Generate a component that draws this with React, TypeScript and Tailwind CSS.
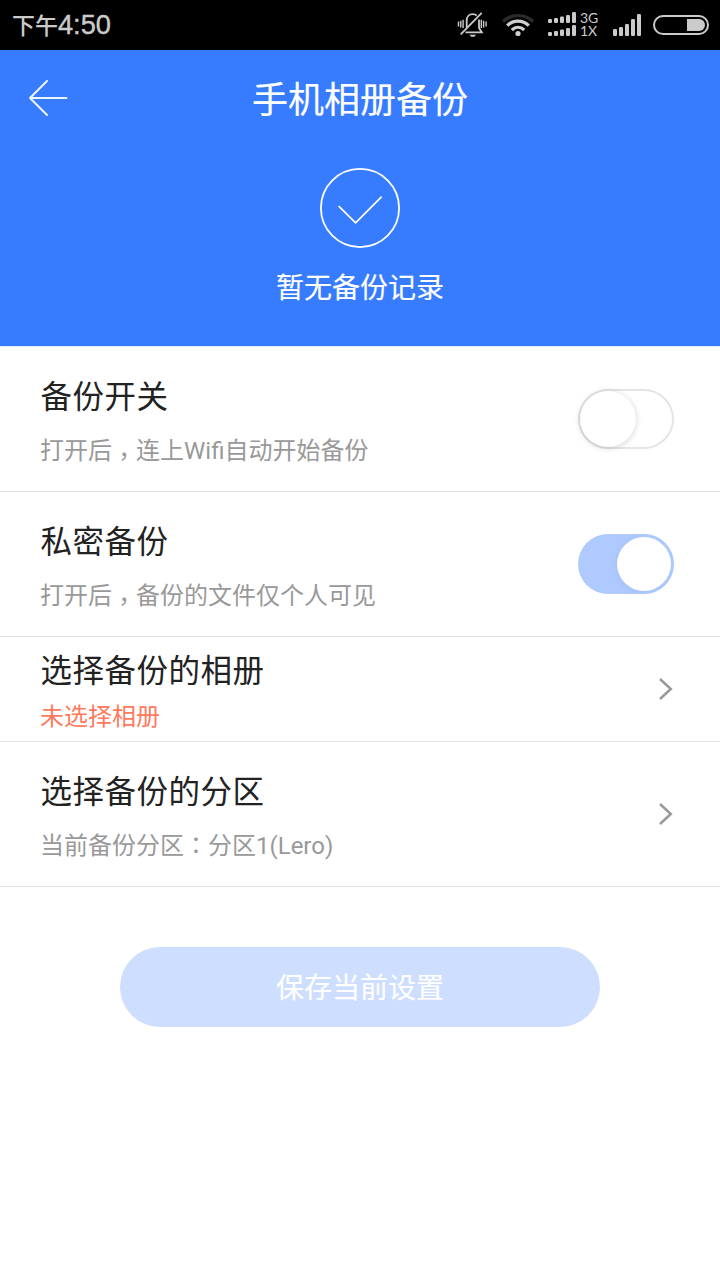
import type { ReactNode } from 'react';

function MutedBell() {
  return (
    <svg className="h-[30px] w-[32px]" viewBox="0 0 32 30" fill="none" stroke="#cbcbcb" strokeWidth="1.8">
      <path d="M9.700 17.500V10.500c0-4 2.500-6.300 6-6.300 1.600 0 3 .5 4 1.300M22 9.500v8.500l2.800 4.400H8.500" />
      <path d="M3.700 24.300L24.700 2.900" />
      <path d="M1.500 11.500v5M3.800 10.800v6.600M6.100 9.800v8.200M24.300 9.800v8.200M26.600 10.800v6.600M29.100 11.500v5" strokeWidth="1.400" />
      <path d="M12.500 24.800h6.500l-1.600 2h-3.300z" fill="#cbcbcb" stroke="none" />
    </svg>
  );
}

function Wifi() {
  return (
    <svg className="h-[26px] w-[34px]" viewBox="0 0 34 26" fill="none" strokeWidth="3.200">
      <path d="M2 9.500c8.500-8 21.500-8 30 0" stroke="#2c2c2c" />
      <path d="M6.200 13.700c6.200-6 15.400-6 21.600 0" stroke="#d0d0d0" />
      <path d="M10.800 18c3.700-3.500 8.700-3.500 12.400 0" stroke="#d0d0d0" />
      <circle cx="17" cy="21.500" r="2.600" fill="#d0d0d0" />
    </svg>
  );
}

function DualSignal() {
  const heights = [4, 5, 6.5, 8, 11];
  return (
    <svg className="h-[26px] w-[28px]" viewBox="0 0 28 26" fill="#cbcbcb">
      {[11, 24].map((base) =>
        heights.map((h, i) => (
          <rect key={`${base}-${i}`} x={i * 6} y={base - h} width="4" height={h} rx="1.200" />
        )),
      )}
    </svg>
  );
}

function Signal() {
  const heights = [7, 9, 12, 17, 22];
  return (
    <svg className="h-[24px] w-[28px]" viewBox="0 0 28 24" fill="#cbcbcb">
      {heights.map((h, i) => (
        <rect key={h} x={i * 6} y={23 - h} width="4" height={h} rx="1.200" />
      ))}
    </svg>
  );
}

function Battery() {
  return (
    <svg className="h-[20px] w-[56px]" viewBox="0 0 56 20">
      <rect x="1" y="1" width="54" height="18" rx="9" fill="none" stroke="#cbcbcb" strokeWidth="2" />
      <path d="M34 4h12a6 6 0 0 1 0 12h-12z" fill="#cbcbcb" />
    </svg>
  );
}

function StatusBar() {
  return (
    <div className="flex h-[50px] items-center bg-black pl-3 pr-[11px] text-[#cbcbcb]">
      <div className="flex flex-1 items-center">
        <span className="pb-[3px] font-['Noto_Sans_CJK_SC',sans-serif] text-[23px] font-medium leading-[40px]">下午</span>
        <span className="font-['Liberation_Sans',sans-serif] text-[27.200px] leading-[40px] [-webkit-text-stroke:0.400px_#cbcbcb]">4:50</span>
      </div>
      <MutedBell />
      <div className="ml-[12px] flex"><Wifi /></div>
      <div className="ml-[13px] flex"><DualSignal /></div>
      <div className="ml-[4px] w-[20px] pb-[2px] font-['Lato',sans-serif] text-[14px] leading-[13px]">
        <div>3G</div>
        <div>1X</div>
      </div>
      <div className="ml-[13px] flex"><Signal /></div>
      <div className="ml-[12px] flex"><Battery /></div>
    </div>
  );
}

function Header() {
  return (
    <header className="h-[296px] bg-[#377bff] text-white">
      <div className="grid h-24 grid-cols-[96px_1fr_96px] items-center">
        <button aria-label="返回" className="pl-7">
          <svg className="h-[38px] w-[40px]" viewBox="0 0 40 38" fill="none" stroke="#fff" strokeOpacity=".92" strokeWidth="2" strokeLinecap="round" strokeLinejoin="round">
            <path d="M19 2L2 19l17 17M2 19h36.500" />
          </svg>
        </button>
        <h1 className="pt-[5px] text-center text-4xl [-webkit-text-stroke:0.200px_#fff]">手机相册备份</h1>
      </div>
      <div className="flex flex-col items-center pt-[22px]">
        <svg className="size-20" viewBox="0 0 80 80" fill="none" stroke="#fff" strokeWidth="1.800">
          <circle cx="40" cy="40" r="39.100" />
          <path d="M18.700 38.200L35.600 54.800 61.700 28.700" />
        </svg>
        <p className="mt-[21px] text-[28px] leading-10 [-webkit-text-stroke:0.150px_#fff]">暂无备份记录</p>
      </div>
    </header>
  );
}

function Toggle({ on }: { on: boolean }) {
  return on ? (
    <span className="flex h-[60px] w-24 items-center justify-end rounded-full bg-[#afcaff] pr-[3px]">
      <span className="size-[54px] rounded-full bg-white shadow-[-1px_1px_6px_rgba(90,120,190,0.120)]" />
    </span>
  ) : (
    <span className="flex h-[60px] w-24 items-center rounded-full border-2 border-[#e5e5e5] bg-white">
      <span className="size-[56px] rounded-full bg-white shadow-[0_1px_6px_rgba(0,0,0,0.180)]" />
    </span>
  );
}

function Chevron() {
  return (
    <svg className="h-6 w-4" viewBox="0 0 16 24" fill="none" stroke="#999" strokeWidth="2.500">
      <path d="M2 2l10.800 10L2 22" />
    </svg>
  );
}

/* Full-width punctuation sits in the middle of its cell. */
function Mark({ children, low }: { children: ReactNode; low?: boolean }) {
  return (
    <span
      lang="zh-TW"
      className={`inline-block w-6 font-['Noto_Sans_CJK_TC',sans-serif] leading-none ${low ? 'align-[-6px]' : ''}`}
    >
      {children}
    </span>
  );
}

interface RowProps {
  title: string;
  note: ReactNode;
  control: ReactNode;
  compact?: boolean;
  alert?: boolean;
}

function Row({ title, note, control, compact, alert }: RowProps) {
  return (
    <section
      className={`flex items-center justify-between border-b border-[#e0e0e0] pl-10 pr-[46px] ${compact ? 'h-[105px]' : 'h-[145px]'}`}
    >
      <div className={`flex flex-col pt-[10px] ${compact ? 'gap-[6px]' : 'gap-[14px]'}`}>
        <h2 className="h-10 pl-[0.500px] text-[31.500px] leading-[42px] tracking-[0.500px] text-[#222]">{title}</h2>
        <p className={`h-10 text-2xl leading-10 ${alert ? 'text-[#ff7a5c]' : 'text-[#999]'}`}>{note}</p>
      </div>
      {control}
    </section>
  );
}

export default function App() {
  return (
    <div
      className="h-[1280px] w-[720px] overflow-hidden bg-white font-['Roboto','Noto_Sans_CJK_SC',sans-serif]"
      lang="zh-CN"
    >
      <StatusBar />
      <Header />
      <main className="border-t border-[#e3ebfa]">
        <Row title="备份开关" note={<>打开后<Mark low>，</Mark>连上Wifi自动开始备份</>} control={<Toggle on={false} />} />
        <Row title="私密备份" note={<>打开后<Mark low>，</Mark>备份的文件仅个人可见</>} control={<Toggle on />} />
        <Row title="选择备份的相册" note="未选择相册" control={<Chevron />} compact alert />
        <Row title="选择备份的分区" note={<>当前备份分区<Mark>：</Mark>分区1(Lero)</>} control={<Chevron />} />
        <div className="flex justify-center pt-[60px]">
          <button className="h-20 w-[480px] rounded-full bg-[#cddeff] pt-[4px] text-[28px] text-white [-webkit-text-stroke:0.150px_#fff]">
            保存当前设置
          </button>
        </div>
      </main>
    </div>
  );
}
